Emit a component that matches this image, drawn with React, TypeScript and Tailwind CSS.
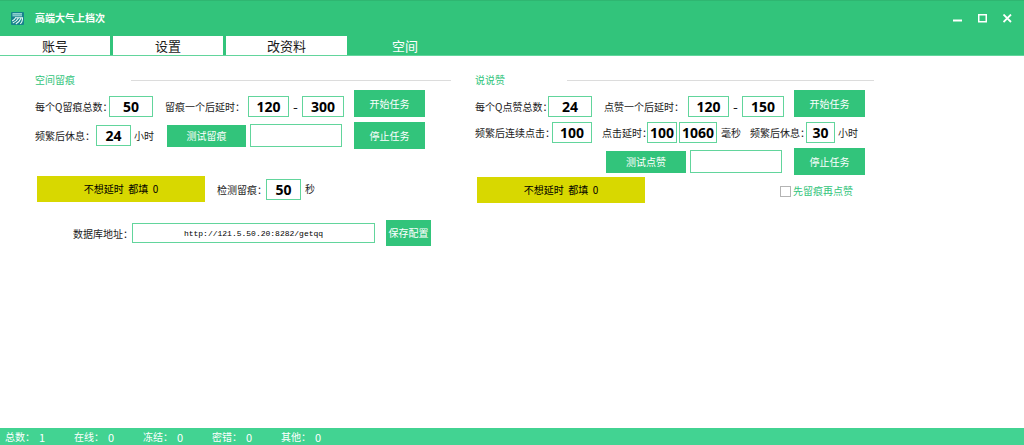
import { useState, InputHTMLAttributes, ReactNode } from 'react'
import clsx from 'clsx'

const tabs = [
  { id: 'account', label: '账号', width: 'w-[110px]' },
  { id: 'settings', label: '设置', width: 'w-[110px]' },
  { id: 'profile', label: '改资料', width: 'w-[121px]' },
  { id: 'space', label: '空间', width: 'w-[110px]' },
]

const stats = [
  { label: '总数：', value: 1 },
  { label: '在线：', value: 0 },
  { label: '冻结：', value: 0 },
  { label: '密错：', value: 0 },
  { label: '其他：', value: 0 },
]

function Field({ className, ...props }: InputHTMLAttributes<HTMLInputElement>) {
  return (
    <input
      type="text"
      className={clsx('shrink-0 border border-[#62d59c] bg-white text-center text-black outline-none', className)}
      {...props}
    />
  )
}

function NumberField({ className, ...props }: InputHTMLAttributes<HTMLInputElement>) {
  return <Field className={clsx("h-[21px] font-['Open_Sans'] text-[14px] font-bold", className)} {...props} />
}

function Label({ htmlFor, className, children }: { htmlFor: string; className?: string; children: ReactNode }) {
  return (
    <label htmlFor={htmlFor} className={clsx('shrink-0 leading-[21px]', className)}>
      {children}
    </label>
  )
}

function Button({ className, children }: { className?: string; children: ReactNode }) {
  return (
    <button type="button" className={clsx('shrink-0 bg-[#32c47b] text-center text-white hover:bg-[#2bb26f]', className)}>
      {children}
    </button>
  )
}

function SectionTitle({ className, children }: { className: string; children: ReactNode }) {
  return (
    <div className="flex h-4 items-center">
      <h2 className={clsx('shrink-0 text-[#32c47b]', className)}>{children}</h2>
      <div className="h-px flex-1 bg-[#dcdcdc]" />
    </div>
  )
}

function Notice() {
  return (
    <button type="button" className="h-[26px] w-[168px] shrink-0 bg-[#d8d800] text-center text-black">
      不想延时&nbsp; 都填&nbsp; 0
    </button>
  )
}

function TitleBar() {
  return (
    <div className="flex h-[35px] items-center border-t border-[#2fb671] pr-3 pl-[11px]">
      <svg viewBox="0 0 13 13" className="h-[13px] w-[13px]" fill="none">
        <rect width="13" height="13" rx="1" fill="#15838c" />
        <rect x="1.500" y="1" width="9.500" height="3.400" fill="#8fd0cf" />
        <path d="M1.500 2.700h9.500" stroke="#4aa9ac" strokeWidth="0.7" />
        <path
          d="M5 5.200C4 7 3 8 1.200 9M7.500 6C6 8.600 4.300 10 1.800 11M10 6.200C8.800 9 7.200 10.800 4.800 12M4 5.800h7.500c0 2.600-.5 4.800-2.300 5.900"
          stroke="#e6faf6"
          strokeWidth="1.1"
        />
      </svg>
      <h1 className="ml-[11px] flex-1 text-[10px] font-bold text-white">高端大气上档次</h1>
      <div className="flex items-center gap-4 text-white">
        <button type="button" aria-label="最小化">
          <svg viewBox="0 0 9 9" className="h-[9px] w-[9px]" stroke="currentColor" strokeWidth="2">
            <path d="M0 6.500h9" />
          </svg>
        </button>
        <button type="button" aria-label="最大化">
          <svg viewBox="0 0 9 9" className="h-[9px] w-[9px]" stroke="currentColor" fill="none" strokeWidth="1.5">
            <rect x="0.75" y="0.75" width="7.5" height="7" />
          </svg>
        </button>
        <button type="button" aria-label="关闭">
          <svg viewBox="0 0 9 9" className="h-[9px] w-[9px]" stroke="currentColor" strokeWidth="1.8">
            <path d="M0.500 0.500l7.500 7.500M8 0.500L0.500 8" />
          </svg>
        </button>
      </div>
    </div>
  )
}

function TracePanel() {
  return (
    <section>
      <SectionTitle className="w-24">空间留痕</SectionTitle>

      <div className="mt-0.5 flex items-end">
        <Label htmlFor="trace-total" className="w-[74px]">每个Q留痕总数：</Label>
        <NumberField id="trace-total" defaultValue="50" className="w-11" />
        <Label htmlFor="trace-min" className="ml-3 w-[83px]">留痕一个后延时：</Label>
        <NumberField id="trace-min" defaultValue="120" className="w-[41px]" />
        <Label htmlFor="trace-max" className="w-[13px] text-center text-[14px]">-</Label>
        <NumberField id="trace-max" defaultValue="300" className="w-[42px]" />
        <Button className="ml-[10px] h-[27px] w-[71px]">开始任务</Button>
      </div>

      <div className="mt-[5px] flex items-center">
        <Label htmlFor="trace-rest" className="w-[61px]">频繁后休息：</Label>
        <NumberField id="trace-rest" defaultValue="24" className="w-[35px]" />
        <span className="ml-[3px] w-[33px] shrink-0">小时</span>
        <Button className="h-[22px] w-[79px]">测试留痕</Button>
        <Field aria-label="测试留痕" className="ml-1 h-[23px] w-[92px]" />
        <Button className="ml-3 h-[27px] w-[71px]">停止任务</Button>
      </div>

      <div className="mt-[27px] flex items-center pl-0.5">
        <Notice />
        <Label htmlFor="trace-check" className="ml-3 w-[49px]">检测留痕：</Label>
        <NumberField id="trace-check" defaultValue="50" className="w-[35px]" />
        <span className="ml-1">秒</span>
      </div>

      <div className="mt-[18px] flex items-center pl-[38px]">
        <Label htmlFor="db-url" className="w-[59px]">数据库地址：</Label>
        <Field
          id="db-url"
          defaultValue="http://121.5.50.20:8282/getqq"
          className="h-5 w-[243px] font-['Liberation_Mono'] text-[8px]"
        />
        <Button className="ml-[11px] h-[26px] w-[45px]">保存配置</Button>
      </div>
    </section>
  )
}

function LikePanel() {
  return (
    <section>
      <SectionTitle className="w-[92px]">说说赞</SectionTitle>

      <div className="mt-0.5 flex items-end">
        <Label htmlFor="like-total" className="w-[73px]">每个Q点赞总数：</Label>
        <NumberField id="like-total" defaultValue="24" className="w-11" />
        <Label htmlFor="like-min" className="ml-3 w-[84px]">点赞一个后延时：</Label>
        <NumberField id="like-min" defaultValue="120" className="w-[41px]" />
        <Label htmlFor="like-max" className="w-[13px] text-center text-[14px]">-</Label>
        <NumberField id="like-max" defaultValue="150" className="w-[42px]" />
        <Button className="ml-[10px] h-[27px] w-[71px]">开始任务</Button>
      </div>

      <div className="mt-[5px] flex items-center">
        <Label htmlFor="like-clicks" className="w-[77px]">频繁后连续点击：</Label>
        <NumberField id="like-clicks" defaultValue="100" className="w-10" />
        <Label htmlFor="click-min" className="ml-[10px] w-[45px]">点击延时：</Label>
        <NumberField id="click-min" defaultValue="100" className="w-[30px]" />
        <NumberField aria-label="点击延时" defaultValue="1060" className="ml-0.5 w-[38px]" />
        <span className="ml-1 w-[29px] shrink-0">毫秒</span>
        <Label htmlFor="like-rest" className="w-[56px]">频繁后休息：</Label>
        <NumberField id="like-rest" defaultValue="30" className="w-[29px]" />
        <span className="ml-[3px]">小时</span>
      </div>

      <div className="mt-[5px] flex items-center pl-[131px]">
        <Button className="h-[22px] w-20">测试点赞</Button>
        <Field aria-label="测试点赞" className="ml-1 h-[23px] w-[92px]" />
        <Button className="ml-3 h-[27px] w-[71px]">停止任务</Button>
      </div>

      <div className="mt-0.5 flex items-center pl-0.5">
        <Notice />
        <label className="ml-[135px] flex items-center gap-0.5 pt-0.5 text-[#32c47b]">
          <input type="checkbox" className="h-[11px] w-[11px] appearance-none border border-[#b4b4b4] bg-white checked:bg-[#32c47b]" />
          先留痕再点赞
        </label>
      </div>
    </section>
  )
}

export default function App() {
  const [tab, setTab] = useState('space')

  return (
    <div
      lang="zh-CN"
      className="flex min-h-screen flex-col bg-white font-['Noto_Sans_CJK_SC',sans-serif] text-[10px] leading-4 whitespace-nowrap text-[#1a1a1a]"
    >
      <header className="bg-[#32c47b]">
        <TitleBar />
        <nav className="flex gap-[3px] border-b border-[#62d59c] pt-px">
          {tabs.map(t => (
            <button
              key={t.id}
              type="button"
              onClick={() => setTab(t.id)}
              className={clsx('h-[19px] text-center text-[13px] leading-[19px]', t.width, tab === t.id ? 'text-white' : 'bg-white')}
            >
              {t.label}
            </button>
          ))}
        </nav>
      </header>

      <main className="flex-1 px-[35px] pt-4">
        {tab === 'space' && (
          <div className="grid max-w-[839px] grid-cols-[416fr_399fr] gap-6">
            <TracePanel />
            <LikePanel />
          </div>
        )}
      </main>

      <footer className="flex h-[17px] items-center bg-[#42d392] pl-[5px] text-white">
        {stats.map(s => (
          <div key={s.label} className="flex w-[69px] items-center gap-1">
            <span>{s.label}</span>
            <span className="text-[11px]">{s.value}</span>
          </div>
        ))}
      </footer>
    </div>
  )
}
